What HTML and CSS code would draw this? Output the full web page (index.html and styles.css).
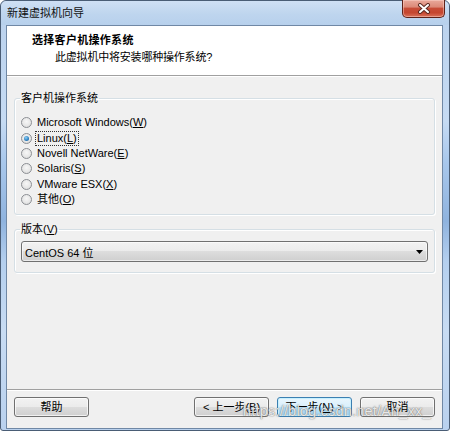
FILE: index.html
```html
<!DOCTYPE html>
<html lang="zh-CN">
<head>
<meta charset="utf-8">
<title>新建虚拟机向导</title>
<link rel="stylesheet" href="styles.css">
</head>
<body>
<div class="window">
  <div class="titlebar">
    <span class="title">新建虚拟机向导</span>
    <div class="close">
      <svg width="14" height="11" viewBox="0 0 14 11">
        <path d="M3 2 L11 9 M11 2 L3 9" stroke="#5b2a22" stroke-width="4" stroke-linecap="round"/>
        <path d="M3 2 L11 9 M11 2 L3 9" stroke="#ffffff" stroke-width="2" stroke-linecap="round"/>
      </svg>
    </div>
  </div>
  <div class="client">
    <div class="header">
      <div class="h-title">选择客户机操作系统</div>
      <div class="h-sub">此虚拟机中将安装哪种操作系统?</div>
    </div>
    <div class="body">
      <fieldset class="group group-os">
        <legend>客户机操作系统</legend>
        <div class="radios">
          <div class="row"><span class="radio"></span><span class="lbl">Microsoft Windows(<u>W</u>)</span></div>
          <div class="row"><span class="radio checked"></span><span class="lbl focus">Linux(<u>L</u>)</span></div>
          <div class="row"><span class="radio"></span><span class="lbl">Novell NetWare(<u>E</u>)</span></div>
          <div class="row"><span class="radio"></span><span class="lbl">Solaris(<u>S</u>)</span></div>
          <div class="row"><span class="radio"></span><span class="lbl">VMware ESX(<u>X</u>)</span></div>
          <div class="row"><span class="radio"></span><span class="lbl">其他(<u>O</u>)</span></div>
        </div>
      </fieldset>
      <fieldset class="group group-ver">
        <legend>版本(<u>V</u>)</legend>
        <div class="combo">
          <span class="combo-text">CentOS 64 位</span>
          <svg class="arrow" width="7" height="4" viewBox="0 0 7 4"><path d="M0 0 H7 L3.5 4 Z" fill="#000"/></svg>
        </div>
      </fieldset>
    </div>
    <div class="footer">
      <button class="btn">帮助</button>
      <div class="spacer"></div>
      <button class="btn">&lt; 上一步(<u>B</u>)</button>
      <button class="btn default">下一步(<u>N</u>) &gt;</button>
      <button class="btn">取消</button>
      <span class="watermark">https://blog.csdn.net/An_xx_</span>
    </div>
  </div>
</div>
</body>
</html>
```

FILE: styles.css
```css
* { box-sizing: border-box; }
html, body {
  margin: 0;
  padding: 0;
  background: #ffffff;
}
body {
  font-family: "Liberation Sans", "Noto Sans CJK SC", sans-serif;
  font-size: 11px;
  color: #000;
}
.window {
  position: relative;
  width: 450px;
  height: 431px;
  border: 1px solid #4a5d75;
  border-radius: 6px 6px 3px 3px;
  background: linear-gradient(to bottom, #c4d9f1 0px, #bcd3ee 25px, #c6dbf3 120px, #a9c8ec 160px, #8fb3de 220px, #b4cfee 260px, #c8dcf3 330px, #b9d1ee 431px);
  display: flex;
  flex-direction: column;
  padding: 0 6px 1px 5px;
}
.titlebar {
  height: 24px;
  display: flex;
  align-items: flex-start;
  margin-left: -5px;
  margin-right: -6px;
  padding-left: 6px;
  background: linear-gradient(to bottom, #cfe0f4 0%, #bed5ee 55%, #b7d0ec 100%);
  border-radius: 6px 6px 0 0;
}
.title {
  line-height: 15px;
  padding-top: 5px;
  flex: 1;
  color: #111;
}
.close {
  width: 43px;
  height: 18px;
  margin-top: -1px;
  margin-right: 4px;
  border: 1px solid #5e2219;
  border-top: none;
  border-radius: 0 0 5px 5px;
  background: linear-gradient(to bottom, #e9a99b 0%, #dc8a79 40%, #c74c37 50%, #c5462f 75%, #d9725b 100%);
  box-shadow: inset 0 0 0 1px rgba(255, 220, 210, 0.45);
  display: flex;
  align-items: center;
  justify-content: center;
}
.client {
  flex: 1;
  border: 1px solid #7088a5;
  background: #f0f0f0;
  display: flex;
  flex-direction: column;
}
.header {
  height: 50px;
  background: #ffffff;
  border-bottom: 1px solid #a0a0a0;
  padding: 7px 0 0 25px;
}
.h-title {
  font-weight: bold;
  line-height: 14px;
  letter-spacing: 0.3px;
}
.h-sub {
  margin-top: 3px;
  padding-left: 23px;
  line-height: 14px;
  letter-spacing: -0.2px;
}
.body {
  flex: 1;
  border-top: 1px solid #ffffff;
  padding: 15px 7px 0 7px;
  display: flex;
  flex-direction: column;
}
.group {
  margin: 0;
  border: 1px solid #d5dfe5;
  border-radius: 3px;
  box-shadow: inset 1px 1px 0 #ffffff, 1px 1px 0 #ffffff;
  padding: 0 6px;
  min-width: 0;
}
.group legend {
  padding: 0 1px;
  margin-left: -1px;
  line-height: 13px;
}
.group-os {
  padding-bottom: 7px;
}
.radios {
  padding-top: 10px;
  display: flex;
  flex-direction: column;
}
.row {
  height: 15.4px;
  display: flex;
  align-items: center;
}
.radio {
  width: 11px;
  height: 11px;
  border-radius: 50%;
  border: 1px solid #8c8f94;
  background: radial-gradient(circle at 50% 40%, #f7f7f7 0%, #e6e6e6 60%, #d2d2d2 100%);
  margin-right: 3px;
  display: flex;
  align-items: center;
  justify-content: center;
  flex: none;
}
.radio.checked::after {
  content: "";
  width: 5px;
  height: 5px;
  border-radius: 50%;
  background: radial-gradient(circle at 40% 35%, #8fd0f5 0%, #2b7fc0 60%, #14528c 100%);
}
.lbl {
  line-height: 13px;
  padding: 0 1px;
  border: 1px dotted transparent;
}
.lbl.focus {
  border-color: #333;
}
.group-ver {
  margin-top: 8px;
  padding-top: 5px;
  padding-bottom: 10px;
}
.combo {
  height: 21px;
  border: 1px solid #707070;
  border-radius: 3px;
  background: linear-gradient(to bottom, #f2f2f2 0%, #ebebeb 50%, #dddddd 50%, #cfcfcf 100%);
  box-shadow: inset 0 0 0 1px rgba(255, 255, 255, 0.6);
  display: flex;
  align-items: center;
  padding: 0 4px 0 3px;
}
.combo-text {
  flex: 1;
}
.footer {
  position: relative;
  height: 39px;
  border-top: 1px solid #a0a0a0;
  padding: 7px 7px 11px 7px;
  display: flex;
  gap: 8px;
  box-shadow: inset 0 1px 0 #ffffff;
}
.spacer { flex: 1; }
.btn {
  width: 75px;
  height: 20px;
  margin: 0;
  padding: 0;
  font: inherit;
  color: #000;
  border: 1px solid #707070;
  border-radius: 3px;
  background: linear-gradient(to bottom, #f2f2f2 0%, #ebebeb 50%, #dddddd 50%, #cfcfcf 100%);
  box-shadow: inset 0 0 0 1px rgba(255, 255, 255, 0.7);
  line-height: 16px;
}
.btn.default {
  border-color: #3c7fb1;
  background: linear-gradient(to bottom, #eaf6fd 0%, #d9f0fc 50%, #bee6fd 50%, #a7d9f5 100%);
  box-shadow: inset 0 0 0 1px #c6f0ff;
}
.watermark {
  position: absolute;
  left: 236px;
  top: 13px;
  font-size: 14.5px;
  line-height: 16px;
  color: rgba(255, 255, 255, 0.85);
  text-shadow: 0 0 1px rgba(70, 70, 70, 0.8), 0 0 2px rgba(120, 120, 120, 0.5);
  letter-spacing: 0.2px;
  pointer-events: none;
  white-space: nowrap;
}
```
